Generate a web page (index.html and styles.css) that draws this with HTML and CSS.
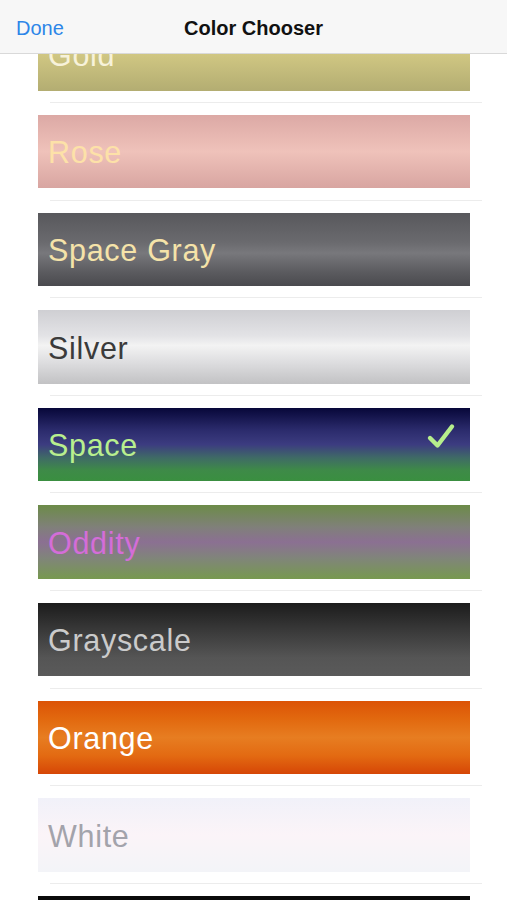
FILE: index.html
```html
<!DOCTYPE html>
<html>
<head>
<meta charset="utf-8">
<title>Color Chooser</title>
<link rel="stylesheet" href="styles.css">
</head>
<body>
<header class="navbar">
  <span class="done">Done</span>
  <span class="title">Color Chooser</span>
</header>
<main class="list">
  <div class="row"><div class="swatch gold"><span class="label">Gold</span></div></div>
  <div class="row"><div class="swatch rose"><span class="label">Rose</span></div></div>
  <div class="row"><div class="swatch spacegray"><span class="label">Space Gray</span></div></div>
  <div class="row"><div class="swatch silver"><span class="label">Silver</span></div></div>
  <div class="row"><div class="swatch space"><span class="label">Space</span>
    <svg class="check" viewBox="0 0 30 28" width="30" height="28"><path d="M4 16 L11.5 23.5 L26 4.5" fill="none" stroke="currentColor" stroke-width="4.4" stroke-linecap="round" stroke-linejoin="round"/></svg>
  </div></div>
  <div class="row"><div class="swatch oddity"><span class="label">Oddity</span></div></div>
  <div class="row"><div class="swatch grayscale"><span class="label">Grayscale</span></div></div>
  <div class="row"><div class="swatch orange"><span class="label">Orange</span></div></div>
  <div class="row"><div class="swatch white"><span class="label">White</span></div></div>
  <div class="row"><div class="swatch black"></div></div>
</main>
</body>
</html>
```
FILE: styles.css
```css
html, body {
  margin: 0;
  padding: 0;
  background: #ffffff;
  overflow: hidden;
}
body {
  width: 507px;
  height: 900px;
  font-family: "Liberation Sans", Arial, sans-serif;
}
.navbar {
  position: fixed;
  top: 0;
  left: 0;
  right: 0;
  height: 53px;
  background: #f7f7f7;
  border-bottom: 1px solid #d9d9d9;
  z-index: 10;
  display: flex;
  align-items: center;
  justify-content: center;
}
.done {
  position: absolute;
  left: 16px;
  top: 17px;
  font-size: 20px;
  color: #2d86e8;
}
.title {
  font-size: 20px;
  font-weight: bold;
  color: #111;
  margin-top: 3px;
}
.list {
  padding-top: 5.4px;
}
.row {
  height: 97.6px;
  box-sizing: border-box;
  padding-top: 12px;
  position: relative;
}
.row::after {
  content: "";
  position: absolute;
  left: 50px;
  width: 432px;
  bottom: 0;
  height: 1px;
  background: #ececec;
}
.swatch {
  margin-left: 38px;
  width: 432px;
  height: 73.4px;
  display: flex;
  align-items: center;
  justify-content: space-between;
  box-sizing: border-box;
  padding-left: 10px;
  padding-right: 14px;
}
.label {
  font-size: 30.5px;
  letter-spacing: 0.7px;
  line-height: 1;
  margin-top: 2px;
}
.check {
  color: #b6ee8c;
  margin-top: -16px;
}
.gold {
  background: linear-gradient(#e3d690, #d6cc86 40%, #b3ad72);
}
.gold .label { color: #f7f2da; }
.rose {
  background: linear-gradient(#dca9a5, #efc2ba 50%, #d8a5a1);
}
.rose .label { color: #fde1a8; }
.spacegray {
  background: linear-gradient(#58585c, #6a6a6e 40%, #78787c 55%, #5c5c60 80%, #4a4a4e);
}
.spacegray .label { color: #f5e3a9; }
.silver {
  background: linear-gradient(#cfcfd3, #e3e3e6 35%, #f3f3f3 48%, #dedee0 70%, #c2c2c4);
}
.silver .label { color: #3b3b3b; }
.space {
  background: linear-gradient(#070739, #2b2b6c 30%, #3c3c80 50%, #3f6a66 68%, #3e8a48 85%, #3a8f40);
}
.space .label { color: #b8ef8e; }
.oddity {
  background: linear-gradient(#6c8b48, #80807a 30%, #8b7092 50%, #80857a 72%, #77994f);
}
.oddity .label { color: #d46dd8; }
.grayscale {
  background: linear-gradient(#1c1c1c, #3b3b3b 40%, #555555 75%, #5a5a5a);
}
.grayscale .label { color: #cbcbcb; }
.orange {
  background: linear-gradient(#dc5306, #e2690f 25%, #e77d21 50%, #e36a12 75%, #d64606);
}
.orange .label { color: #ffffff; }
.white {
  background: linear-gradient(#f1f1f9, #fbf4f8 50%, #f3f4f8);
}
.white .label { color: #a3a3ab; }
.black {
  background: #0a0a0a;
}
```
